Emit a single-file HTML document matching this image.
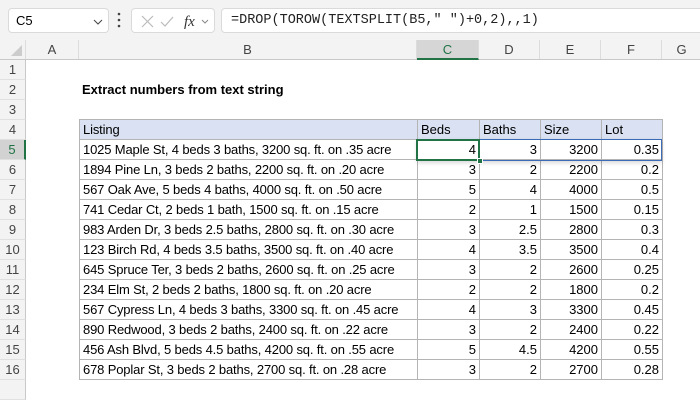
<!DOCTYPE html><html><head><style>
*{margin:0;padding:0;box-sizing:border-box}
body{width:700px;height:400px;overflow:hidden;background:#fff;font-family:"Liberation Sans",Calibri,sans-serif;font-size:13px;color:#000;position:relative}
.tb{position:absolute;left:0;top:0;width:700px;height:40px;background:#f3f3f3}
.box{position:absolute;background:#fff;border:1px solid #dadada;border-radius:4px}
.ch{position:absolute;top:40px;height:20px;background:#f3f3f3;border-bottom:1px solid #c8c8c8;width:700px}
.ch div{position:absolute;top:0;height:19px;border-right:1px solid #dcdcdc;text-align:center;line-height:19px;color:#444;font-size:13px}
.rh{position:absolute;left:0;width:26px;height:20px;background:#f3f3f3;border-right:1px solid #c8c8c8;border-bottom:1px solid #e0e0e0;text-align:center;color:#444;font-size:13px;line-height:20px}
table{position:absolute;left:79px;top:119px;border-collapse:collapse;table-layout:fixed}
td{height:20px;border:1px solid #b4b4b4;padding:0 3px;white-space:nowrap;overflow:hidden;font-size:13px;line-height:18px;text-align:right}
td:first-child{text-align:left;font-size:13px;letter-spacing:-0.15px}
tr.h td{background:#d9e1f2;text-align:left}
</style></head><body>
<div class="tb">
<div class="box" style="left:8px;top:8px;width:101px;height:25px"><span style="position:absolute;left:7px;top:4px">C5</span><svg style="position:absolute;left:84px;top:9px" width="10" height="8"><path d="M1 2l4 4 4-4" stroke="#444" fill="none"/></svg></div>
<svg style="position:absolute;left:116px;top:12px" width="6" height="16"><circle cx="3" cy="2" r="1.3" fill="#444"/><circle cx="3" cy="8" r="1.3" fill="#444"/><circle cx="3" cy="14" r="1.3" fill="#444"/></svg>
<div class="box" style="left:131px;top:8px;width:84px;height:25px">
<svg width="84" height="25" style="position:absolute;left:0;top:0"><path d="M10 7l11 11M21 7L10 18" stroke="#bbb" stroke-width="1.2" fill="none"/><path d="M29 13l4 4 8-9" stroke="#bbb" stroke-width="1.2" fill="none"/><text x="52" y="17" font-family="Liberation Serif" font-style="italic" font-size="15" fill="#333">fx</text><path d="M70 11l3 3 3-3" stroke="#888" fill="none"/></svg></div>
<div class="box" style="left:221px;top:8px;width:484px;height:25px"><span style="position:absolute;left:9px;top:4px;font-family:'Liberation Mono',monospace;font-size:13.5px;color:#222">=DROP(TOROW(TEXTSPLIT(B5," ")+0,2),,1)</span></div>
</div>
<div class="ch">
<div style="left:0;width:26px"><svg width="26" height="19"><path d="M22 5v11H11z" fill="#ccc"/></svg></div>
<div style="left:26px;width:53px">A</div>
<div style="left:79px;width:338px">B</div>
<div style="left:417px;width:62px;background:#d6d6d6;border-bottom:2px solid #217346;height:20px;color:#217346">C</div>
<div style="left:479px;width:61px">D</div>
<div style="left:540px;width:61px">E</div>
<div style="left:601px;width:61px">F</div>
<div style="left:662px;width:40px">G</div>
</div>
<div class="rh" style="top:60px">1</div><div class="rh" style="top:80px">2</div><div class="rh" style="top:100px">3</div><div class="rh" style="top:120px">4</div>
<div class="rh" style="top:140px;background:#d2d2d2;color:#217346;border-right:2px solid #217346">5</div>
<div class="rh" style="top:160px">6</div><div class="rh" style="top:180px">7</div><div class="rh" style="top:200px">8</div><div class="rh" style="top:220px">9</div><div class="rh" style="top:240px">10</div><div class="rh" style="top:260px">11</div><div class="rh" style="top:280px">12</div><div class="rh" style="top:300px">13</div><div class="rh" style="top:320px">14</div><div class="rh" style="top:340px">15</div><div class="rh" style="top:360px">16</div><div class="rh" style="top:380px"></div>
<div style="position:absolute;left:82px;top:82px;font-weight:bold;font-size:13px">Extract numbers from text string</div>
<table>
<colgroup><col style="width:338px"><col style="width:62px"><col style="width:61px"><col style="width:61px"><col style="width:61px"></colgroup>
<tr class="h"><td>Listing</td><td>Beds</td><td>Baths</td><td>Size</td><td>Lot</td></tr>
<tr><td>1025 Maple St, 4 beds 3 baths, 3200 sq. ft. on .35 acre</td><td>4</td><td>3</td><td>3200</td><td>0.35</td></tr>
<tr><td>1894 Pine Ln, 3 beds 2 baths, 2200 sq. ft. on .20 acre</td><td>3</td><td>2</td><td>2200</td><td>0.2</td></tr>
<tr><td>567 Oak Ave, 5 beds 4 baths, 4000 sq. ft. on .50 acre</td><td>5</td><td>4</td><td>4000</td><td>0.5</td></tr>
<tr><td>741 Cedar Ct, 2 beds 1 bath, 1500 sq. ft. on .15 acre</td><td>2</td><td>1</td><td>1500</td><td>0.15</td></tr>
<tr><td>983 Arden Dr, 3 beds 2.5 baths, 2800 sq. ft. on .30 acre</td><td>3</td><td>2.5</td><td>2800</td><td>0.3</td></tr>
<tr><td>123 Birch Rd, 4 beds 3.5 baths, 3500 sq. ft. on .40 acre</td><td>4</td><td>3.5</td><td>3500</td><td>0.4</td></tr>
<tr><td>645 Spruce Ter, 3 beds 2 baths, 2600 sq. ft. on .25 acre</td><td>3</td><td>2</td><td>2600</td><td>0.25</td></tr>
<tr><td>234 Elm St, 2 beds 2 baths, 1800 sq. ft. on .20 acre</td><td>2</td><td>2</td><td>1800</td><td>0.2</td></tr>
<tr><td>567 Cypress Ln, 4 beds 3 baths, 3300 sq. ft. on .45 acre</td><td>4</td><td>3</td><td>3300</td><td>0.45</td></tr>
<tr><td>890 Redwood, 3 beds 2 baths, 2400 sq. ft. on .22 acre</td><td>3</td><td>2</td><td>2400</td><td>0.22</td></tr>
<tr><td>456 Ash Blvd, 5 beds 4.5 baths, 4200 sq. ft. on .55 acre</td><td>5</td><td>4.5</td><td>4200</td><td>0.55</td></tr>
<tr><td>678 Poplar St, 3 beds 2 baths, 2700 sq. ft. on .28 acre</td><td>3</td><td>2</td><td>2700</td><td>0.28</td></tr>
</table>
<div style="position:absolute;left:417px;top:139px;width:245px;height:22px;border:1px solid #3b6bb5;box-shadow:0 2px 4px rgba(0,0,0,.15)"></div>
<div style="position:absolute;left:416px;top:139px;width:64px;height:22px;border:2px solid #217346"></div>
<div style="position:absolute;left:477px;top:158px;width:6px;height:6px;background:#217346;border:1px solid #fff"></div>
</body></html>
